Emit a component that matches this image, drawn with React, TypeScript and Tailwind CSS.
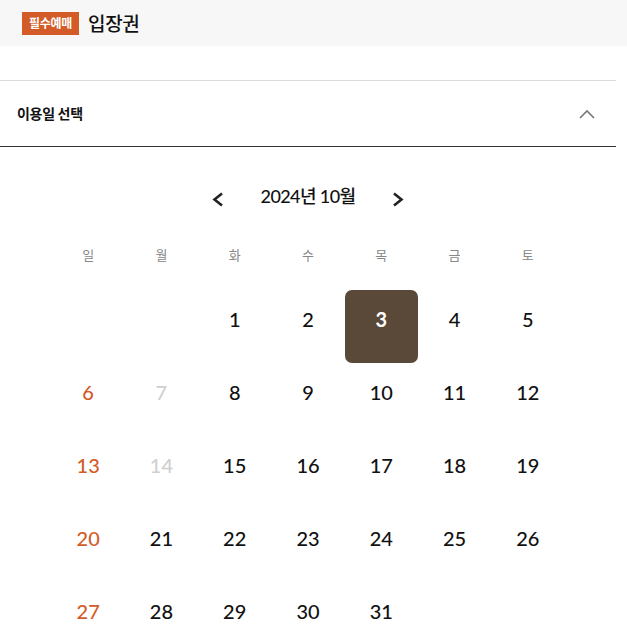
import React from 'react';

const KR = '"Noto Sans CJK KR", "Noto Sans", sans-serif';
const NUM = 'Lato, "Noto Sans CJK KR", sans-serif';

type Day = { n: number; tone: 'sun' | 'off' | 'normal' } | null;

const WEEKDAYS = ['일', '월', '화', '수', '목', '금', '토'];

// October 2024 starts on Tuesday
const buildDays = (): Day[] => {
  const cells: Day[] = [null, null];
  for (let n = 1; n <= 31; n++) {
    const col = (n + 1) % 7;
    let tone: 'sun' | 'off' | 'normal' = 'normal';
    if (col === 0) tone = 'sun';
    if (n === 7 || n === 14) tone = 'off';
    cells.push({ n, tone });
  }
  return cells;
};

const SELECTED = 3;

const App: React.FC = () => {
  const days = buildDays();

  return (
    <div className="w-full bg-white" style={{ fontFamily: KR }}>
      {/* Header */}
      <header className="h-[46px] bg-[#f7f7f7] flex items-center px-[22px] gap-[9px]">
        <span className="h-[23px] px-[7px] flex items-center bg-[#d35b27] text-white text-[12px] font-bold tracking-[-0.3px]">
          필수예매
        </span>
        <h1 className="text-[19px] font-medium text-[#111] tracking-[-0.3px]">입장권</h1>
      </header>

      <section className="w-[616px] mt-[34px]">
        {/* Accordion title */}
        <div className="h-[67px] border-t border-[#dcdcdc] border-b border-b-[#333] flex items-center justify-between pl-[17px] pr-[21px]">
          <span className="text-[14px] font-bold text-[#111] tracking-[-0.3px] -mt-[1px]">이용일 선택</span>
          <svg width="16" height="10" viewBox="0 0 16 10" fill="none">
            <polyline points="1,9 8,2 15,9" stroke="#777" strokeWidth="1.6" />
          </svg>
        </div>

        {/* Calendar */}
        <div className="pt-[29px] flex flex-col items-center">
          <div className="h-[40px] flex items-center gap-[36px]">
            <button className="w-[14px] h-[18px] flex items-center justify-center mt-[6px]">
              <svg width="12" height="15" viewBox="0 0 12 15" fill="none">
                <polyline points="10,1.5 2.5,7.5 10,13.5" stroke="#222" strokeWidth="2.6" />
              </svg>
            </button>
            <span className="text-[18px] font-medium text-[#111] tracking-[-0.6px]" style={{ fontFamily: NUM }}>
              2024년 10월
            </span>
            <button className="w-[14px] h-[18px] flex items-center justify-center mt-[6px]">
              <svg width="12" height="15" viewBox="0 0 12 15" fill="none">
                <polyline points="2,1.5 9.5,7.5 2,13.5" stroke="#222" strokeWidth="2.6" />
              </svg>
            </button>
          </div>

          <div className="w-[513px] grid grid-cols-7 mt-[24px] h-[30px] items-center">
            {WEEKDAYS.map(w => (
              <span key={w} className="text-center text-[13px] text-[#888]">{w}</span>
            ))}
          </div>

          <div className="w-[513px] grid grid-cols-7 mt-[20px]">
            {days.map((d, i) => {
              if (!d) return <div key={`e${i}`} className="h-[73px]" />;
              const sel = d.n === SELECTED;
              const color = sel
                ? 'text-white'
                : d.tone === 'sun'
                ? 'text-[#d35b27]'
                : d.tone === 'off'
                ? 'text-[#cfcfcf]'
                : 'text-[#111]';
              return (
                <div key={d.n} className="h-[73px] flex justify-center">
                  <div
                    className={`w-[73px] h-[73px] flex justify-center pt-[17px] rounded-[7px] ${sel ? 'bg-[#5a4838]' : ''}`}
                  >
                    <span
                      className={`text-[20px] leading-[24px] ${sel ? 'font-bold' : 'font-medium'} ${color}`}
                      style={{ fontFamily: NUM }}
                    >
                      {d.n}
                    </span>
                  </div>
                </div>
              );
            })}
          </div>
        </div>
      </section>
    </div>
  );
};

export default App;
